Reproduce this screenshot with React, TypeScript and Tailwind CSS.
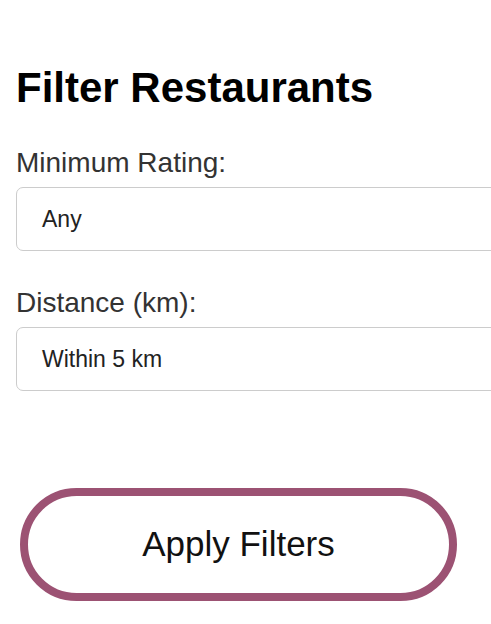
export default function App() {
  const filters = [
    { label: "Minimum Rating:", value: "Any" },
    { label: "Distance (km):", value: "Within 5 km" },
  ];

  return (
    <div className="h-[624px] w-[491px] overflow-hidden bg-white font-['Liberation_Sans',Arial,sans-serif]">
      <div className="px-4 pt-[64px]">
        <h1 className="text-[42px] font-bold leading-[48px] text-black">Filter Restaurants</h1>

        <div className="mt-[36px] flex flex-col gap-[37px]">
          {filters.map((f) => (
            <div key={f.label} className="flex flex-col gap-[9px]">
              <label className="text-[28px] leading-[30px] text-[#333]">{f.label}</label>
              <div className="flex h-[64px] w-[520px] items-center rounded-[7px] border border-[#cccccc] bg-white pl-[25px] text-[23px] text-[#222]">
                {f.value}
              </div>
            </div>
          ))}
        </div>
      </div>

      <button className="ml-[20px] mt-[97px] flex h-[113px] w-[437px] items-center justify-center rounded-full border-[8px] border-[#9c5273] bg-white text-[35px] text-[#111]">
        Apply Filters
      </button>
    </div>
  );
}
